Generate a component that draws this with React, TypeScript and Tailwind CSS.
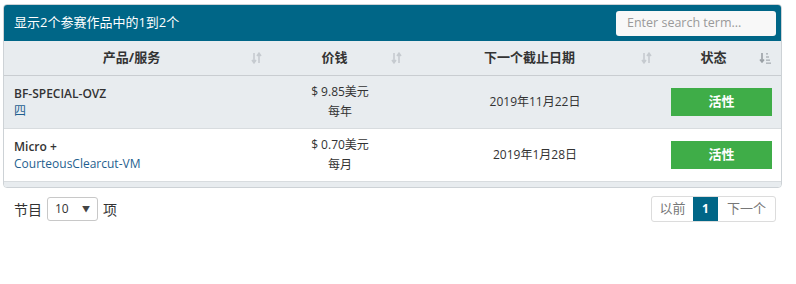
const font = { fontFamily: '"Open Sans", "Noto Sans CJK SC", sans-serif' };

const SortIcon = ({ active }: { active?: boolean }) =>
  active ? (
    <svg width="12" height="12" viewBox="0 0 12 12" className="shrink-0">
      <path d="M3 1v8.5M1 7.5l2 2.5 2-2.5" stroke="#9aa0a5" strokeWidth="1.6" fill="none" />
      <rect x="7" y="1" width="2" height="1.6" fill="#b4b9be" />
      <rect x="7" y="4.2" width="3" height="1.6" fill="#b4b9be" />
      <rect x="7" y="7.4" width="4" height="1.6" fill="#b4b9be" />
      <rect x="7" y="10.4" width="5" height="1.6" fill="#b4b9be" />
    </svg>
  ) : (
    <svg width="11" height="12" viewBox="0 0 11 12" className="shrink-0">
      <path d="M3 1v9.5M1 8l2 2.8L5 8" stroke="#c6cbd0" strokeWidth="1.6" fill="none" />
      <path d="M8 11V1.5M6 4l2-2.8L10 4" stroke="#c6cbd0" strokeWidth="1.6" fill="none" />
    </svg>
  );

const HeadCell = ({ label, active, last }: { label: string; active?: boolean; last?: boolean }) => (
  <div className={`flex items-center h-full pl-[8px] ${last ? "pr-[10px]" : "pr-[8px]"}`}>
    <span className="flex-1 text-center font-bold text-[13px] text-[#333]">{label}</span>
    <SortIcon active={active} />
  </div>
);

const rows = [
  { name: "BF-SPECIAL-OVZ", sub: "四", price: "$ 9.85美元", cycle: "每年", date: "2019年11月22日", striped: true },
  { name: "Micro +", sub: "CourteousClearcut-VM", price: "$ 0.70美元", cycle: "每月", date: "2019年1月28日", striped: false },
];

export default function App() {
  return (
    <div className="w-[796px] h-[284px] bg-white pt-[4px] pl-[3px]" style={font}>
      <div className="w-[779px] border border-[#cdd2d6] rounded-[4px] overflow-hidden">
        <div className="h-[36px] bg-[#006687] flex items-center justify-between pl-[10px] pr-[5px]">
          <span className="text-white text-[13px]">显示2个参赛作品中的1到2个</span>
          <div className="w-[160px] h-[25px] rounded-[3px] bg-[#f8f8f8] flex items-center px-[11px] text-[12.5px] text-[#9a9a9a]">
            Enter search term...
          </div>
        </div>
        <div className="grid grid-cols-[266px_140px_250px_121px]">
          <div className="contents">
            <div className="h-[35px] bg-[#e8ecef] border-b border-[#c9cdd1]"><HeadCell label="产品/服务" /></div>
            <div className="h-[35px] bg-[#e8ecef] border-b border-[#c9cdd1]"><HeadCell label="价钱" /></div>
            <div className="h-[35px] bg-[#e8ecef] border-b border-[#c9cdd1]"><HeadCell label="下一个截止日期" /></div>
            <div className="h-[35px] bg-[#e8ecef] border-b border-[#c9cdd1]"><HeadCell label="状态" active last /></div>
          </div>
          {rows.map((r) => {
            const bg = r.striped ? "bg-[#e8ecef]" : "bg-white";
            return (
              <div key={r.name} className="contents">
                <div className={`${bg} h-[53px] border-b border-[#d8dcdf] flex flex-col justify-center pl-[10px] text-[12px] leading-[17px]`}>
                  <span className="text-[#333] font-semibold">{r.name}</span>
                  <span className="text-[#1f5f8f]">{r.sub}</span>
                </div>
                <div className={`${bg} h-[53px] border-b border-[#d8dcdf] flex flex-col justify-center items-center text-[12px] leading-[20px] text-[#333]`}>
                  <span>{r.price}</span>
                  <span>{r.cycle}</span>
                </div>
                <div className={`${bg} h-[53px] border-b border-[#d8dcdf] flex items-center justify-center text-[12px] text-[#333]`}>
                  {r.date}
                </div>
                <div className={`${bg} h-[53px] border-b border-[#d8dcdf] flex items-center pl-[11px]`}>
                  <div className="w-[101px] h-[28px] bg-[#3fad48] flex items-center justify-center text-white font-bold text-[13px]">
                    活性
                  </div>
                </div>
              </div>
            );
          })}
        </div>
        <div className="h-[5px] bg-[#e8ecef]" />
      </div>
      <div className="w-[779px] flex items-center justify-between mt-[8px] pl-[11px] pr-[6px]">
        <div className="flex items-center gap-[5px] text-[14px] text-[#333]">
          <span>节目</span>
          <div className="w-[51px] h-[24px] border border-[#c8c8c8] rounded-[3px] flex items-center justify-between pl-[7px] pr-[7px] text-[12px]">
            <span>10</span>
            <span className="text-[8px] text-[#444]">▼</span>
          </div>
          <span>项</span>
        </div>
        <div className="flex h-[26px] border border-[#dcdcdc] rounded-[3px] overflow-hidden text-[13px] text-[#777]">
          <div className="w-[41px] flex items-center justify-center">以前</div>
          <div className="w-[25px] flex items-center justify-center bg-[#006687] text-white font-bold text-[12px]">1</div>
          <div className="w-[57px] flex items-center justify-center">下一个</div>
        </div>
      </div>
    </div>
  );
}
